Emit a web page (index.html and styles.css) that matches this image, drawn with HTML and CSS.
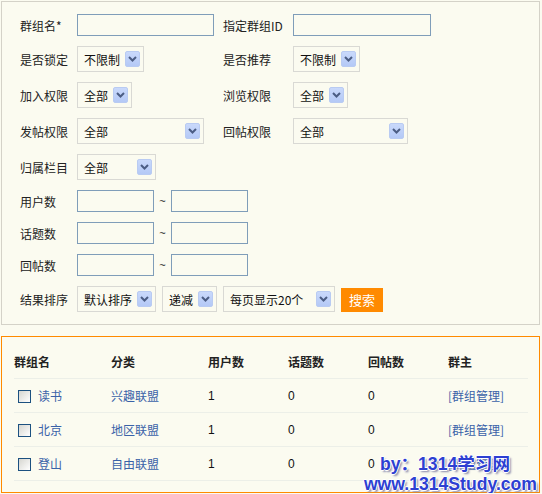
FILE: index.html
```html
<!DOCTYPE html>
<html>
<head>
<meta charset="utf-8">
<link rel="stylesheet" href="styles.css">
</head>
<body>
<div class="panel search">
  <div class="row h22">
    <span class="lbl">群组名*</span>
    <span class="fld"><span class="inp w137"></span></span>
    <span class="lbl2">指定群组ID</span>
    <span class="inp w138"></span>
  </div>
  <div class="row h26">
    <span class="lbl">是否锁定</span>
    <span class="fld"><span class="sel" style="width:67px"><span class="st">不限制</span><span class="arr"><svg width="9" height="6" viewBox="0 0 9 6"><path d="M1 1 L4.5 4.5 L8 1" fill="none" stroke="#4b5d84" stroke-width="2"/></svg></span></span></span>
    <span class="lbl2">是否推荐</span>
    <span class="sel" style="width:67px"><span class="st">不限制</span><span class="arr"><svg width="9" height="6" viewBox="0 0 9 6"><path d="M1 1 L4.5 4.5 L8 1" fill="none" stroke="#4b5d84" stroke-width="2"/></svg></span></span>
  </div>
  <div class="row h26">
    <span class="lbl">加入权限</span>
    <span class="fld"><span class="sel" style="width:55px"><span class="st">全部</span><span class="arr"><svg width="9" height="6" viewBox="0 0 9 6"><path d="M1 1 L4.5 4.5 L8 1" fill="none" stroke="#4b5d84" stroke-width="2"/></svg></span></span></span>
    <span class="lbl2">浏览权限</span>
    <span class="sel" style="width:55px"><span class="st">全部</span><span class="arr"><svg width="9" height="6" viewBox="0 0 9 6"><path d="M1 1 L4.5 4.5 L8 1" fill="none" stroke="#4b5d84" stroke-width="2"/></svg></span></span>
  </div>
  <div class="row h26">
    <span class="lbl">发帖权限</span>
    <span class="fld"><span class="sel" style="width:127px"><span class="st">全部</span><span class="arr"><svg width="9" height="6" viewBox="0 0 9 6"><path d="M1 1 L4.5 4.5 L8 1" fill="none" stroke="#4b5d84" stroke-width="2"/></svg></span></span></span>
    <span class="lbl2">回帖权限</span>
    <span class="sel" style="width:115px"><span class="st">全部</span><span class="arr"><svg width="9" height="6" viewBox="0 0 9 6"><path d="M1 1 L4.5 4.5 L8 1" fill="none" stroke="#4b5d84" stroke-width="2"/></svg></span></span>
  </div>
  <div class="row h26">
    <span class="lbl">归属栏目</span>
    <span class="sel" style="width:79px"><span class="st">全部</span><span class="arr"><svg width="9" height="6" viewBox="0 0 9 6"><path d="M1 1 L4.5 4.5 L8 1" fill="none" stroke="#4b5d84" stroke-width="2"/></svg></span></span>
  </div>
  <div class="row h22">
    <span class="lbl">用户数</span>
    <span class="inp w77"></span><span class="tilde">~</span><span class="inp w77"></span>
  </div>
  <div class="row h22">
    <span class="lbl">话题数</span>
    <span class="inp w77"></span><span class="tilde">~</span><span class="inp w77"></span>
  </div>
  <div class="row h22">
    <span class="lbl">回帖数</span>
    <span class="inp w77"></span><span class="tilde">~</span><span class="inp w77"></span>
  </div>
  <div class="row h26 sortrow">
    <span class="lbl">结果排序</span>
    <span class="sel" style="width:79px"><span class="st">默认排序</span><span class="arr"><svg width="9" height="6" viewBox="0 0 9 6"><path d="M1 1 L4.5 4.5 L8 1" fill="none" stroke="#4b5d84" stroke-width="2"/></svg></span></span>
    <span class="sel" style="width:55px"><span class="st">递减</span><span class="arr"><svg width="9" height="6" viewBox="0 0 9 6"><path d="M1 1 L4.5 4.5 L8 1" fill="none" stroke="#4b5d84" stroke-width="2"/></svg></span></span>
    <span class="sel" style="width:112px"><span class="st">每页显示20个</span><span class="arr"><svg width="9" height="6" viewBox="0 0 9 6"><path d="M1 1 L4.5 4.5 L8 1" fill="none" stroke="#4b5d84" stroke-width="2"/></svg></span></span>
    <span class="btn">搜索</span>
  </div>
</div>

<div class="panel result">
  <table class="list">
    <thead>
      <tr><th class="c1">群组名</th><th class="c2">分类</th><th class="c3">用户数</th><th class="c4">话题数</th><th class="c5">回帖数</th><th class="c6">群主</th></tr>
    </thead>
    <tbody>
      <tr><td><span class="chk"></span><a>读书</a></td><td><a>兴趣联盟</a></td><td>1</td><td>0</td><td>0</td><td><a>[群组管理]</a></td></tr>
      <tr><td><span class="chk"></span><a>北京</a></td><td><a>地区联盟</a></td><td>1</td><td>0</td><td>0</td><td><a>[群组管理]</a></td></tr>
      <tr><td><span class="chk"></span><a>登山</a></td><td><a>自由联盟</a></td><td>1</td><td>0</td><td>0</td><td><a>[群组管理]</a></td></tr>
    </tbody>
  </table>
  <div class="mark">
    <div class="m1">by：1314学习网</div>
    <div class="m2">www.1314Study.com</div>
  </div>
</div>
</body>
</html>
```
FILE: styles.css
```css
html, body {
  margin: 0;
  padding: 0;
  background: #fbfbf0;
}
body {
  font-family: "Noto Sans CJK SC", "Liberation Sans", sans-serif;
  font-size: 12px;
  color: #222;
}
.panel {
  box-sizing: border-box;
  width: 539px;
  margin-left: 1px;
  background: #fbfbf0;
}
.search {
  margin-top: 1px;
  border: 1px solid #d4d2c8;
  padding: 12px 0 12px 18px;
  display: flex;
  flex-direction: column;
  gap: 10px;
}
.row {
  display: flex;
  align-items: center;
}
.h22 { height: 22px; }
.h26 { height: 26px; }
.lbl {
  width: 57px;
  flex: none;
}
.fld {
  width: 146px;
  flex: none;
  display: flex;
}
.lbl2 {
  width: 70px;
  flex: none;
}
.inp {
  box-sizing: border-box;
  height: 22px;
  border: 1px solid #7f9db9;
  background: #fbfbf0;
  display: inline-block;
}
.w137 { width: 137px; }
.w138 { width: 138px; }
.w77 { width: 77px; }
.tilde {
  width: 17px;
  text-align: center;
  flex: none;
  font-family: "Liberation Sans", sans-serif;
  font-size: 11px;
}
.sel {
  box-sizing: border-box;
  height: 26px;
  border: 1px solid #d9d9d4;
  display: flex;
  align-items: center;
  padding: 0 3px 0 6px;
  flex: none;
  color: #111;
}
.st {
  flex: 1;
  white-space: nowrap;
  overflow: hidden;
}
.arr {
  box-sizing: border-box;
  width: 15px;
  height: 16px;
  border: 1px solid #b9cbf2;
  border-radius: 2px;
  background: linear-gradient(#c9d9fb, #b4c9f6);
  display: flex;
  align-items: center;
  justify-content: center;
  flex: none;
}
.arr svg { display: block; }
.sortrow .sel { margin-right: 6px; }
.btn {
  width: 42px;
  height: 24px;
  background: #ff8a00;
  color: #fff;
  font-size: 13px;
  display: flex;
  align-items: center;
  justify-content: center;
  margin-top: 1px;
}
.result {
  position: relative;
  margin-top: 11px;
  border: 1px solid #ff8a00;
  padding: 8px 12px 11px 12px;
}
.list {
  width: 514px;
  border-collapse: collapse;
  table-layout: fixed;
}
.list th, .list td {
  height: 33px;
  padding: 0;
  text-align: left;
  border-bottom: 1px solid #ecefe8;
  white-space: nowrap;
}
.list th {
  font-weight: bold;
  color: #222;
}
.c1 { width: 97px; }
.c2 { width: 97px; }
.c3 { width: 80px; }
.c4 { width: 80px; }
.c5 { width: 80px; }
.c6 { width: 80px; }
.list td {
  font-family: "Liberation Sans", "Noto Sans CJK SC", sans-serif;
  color: #111;
}
.list a {
  color: #3a62a8;
  font-family: "Noto Sans CJK SC", sans-serif;
}
.chk {
  display: inline-block;
  box-sizing: border-box;
  width: 13px;
  height: 13px;
  border: 1px solid #1c5180;
  background: linear-gradient(135deg, #d6d6d0, #ffffff);
  margin: 0 7px 0 4px;
  vertical-align: -2px;
}
.mark {
  position: absolute;
  right: 2px;
  bottom: -2px;
  font-family: "Liberation Sans", "Noto Sans CJK SC", sans-serif;
  font-weight: bold;
  font-size: 17.6px;
  line-height: 20px;
  color: #2d3fd2;
  text-shadow: 1px 0 0 #fff, -1px 0 0 #fff, 0 1px 0 #fff, 0 -1px 0 #fff, 2px 2px 2px #8888aa;
}
.m1 { padding-left: 16px; }
```
